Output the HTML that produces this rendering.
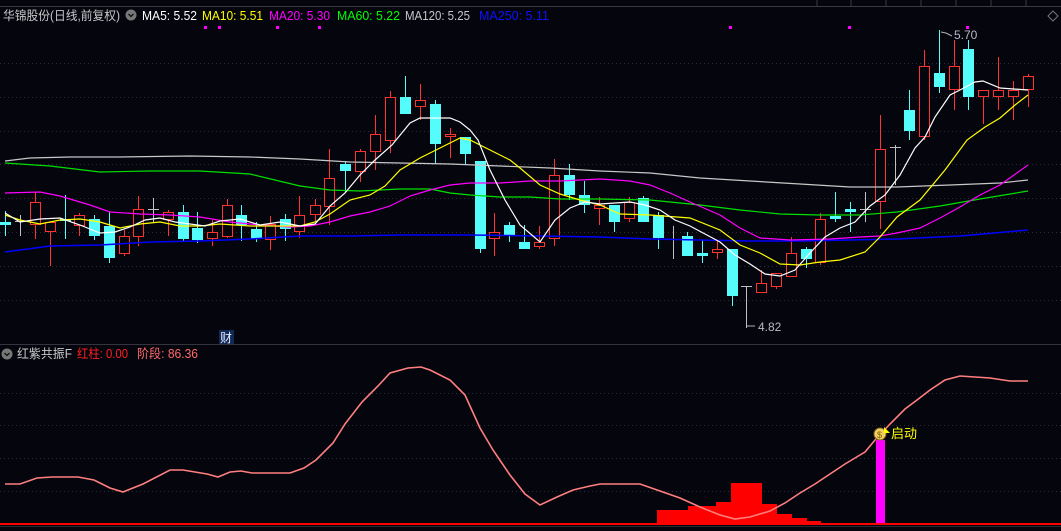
<!DOCTYPE html>
<html><head><meta charset="utf-8">
<style>
html,body{margin:0;padding:0;background:#05050e;}
body{width:1061px;height:531px;overflow:hidden;position:relative;font-family:"Liberation Sans","Noto Sans CJK SC",sans-serif;}
svg{position:absolute;left:0;top:0;}
.t{font-size:12.5px;}
</style></head>
<body>
<svg id="s" width="1061" height="531" xmlns="http://www.w3.org/2000/svg">
<rect width="1061" height="531" fill="#05050e"/>
<line x1="0" y1="6.5" x2="1061" y2="6.5" stroke="#3a3a42"/>
<g stroke="#3a3a42"><line x1="817" y1="0" x2="817" y2="6"/><line x1="851" y1="0" x2="851" y2="6"/><line x1="886" y1="0" x2="886" y2="6"/><line x1="921" y1="0" x2="921" y2="6"/><line x1="956" y1="0" x2="956" y2="6"/><line x1="991" y1="0" x2="991" y2="6"/><line x1="1026" y1="0" x2="1026" y2="6"/></g>
<g stroke="#2e2e3a" stroke-dasharray="1,3">
<line x1="0" y1="63.5" x2="1061" y2="63.5"/><line x1="0" y1="97.5" x2="1061" y2="97.5"/><line x1="0" y1="131.5" x2="1061" y2="131.5"/><line x1="0" y1="164.5" x2="1061" y2="164.5"/><line x1="0" y1="198.5" x2="1061" y2="198.5"/><line x1="0" y1="232.5" x2="1061" y2="232.5"/><line x1="0" y1="266.5" x2="1061" y2="266.5"/><line x1="0" y1="300.5" x2="1061" y2="300.5"/>
<line x1="0" y1="393.5" x2="1061" y2="393.5"/><line x1="0" y1="425.5" x2="1061" y2="425.5"/><line x1="0" y1="458.5" x2="1061" y2="458.5"/><line x1="0" y1="491.5" x2="1061" y2="491.5"/>
</g>
<line x1="0" y1="344.5" x2="1061" y2="344.5" stroke="#34343e"/>
<path d="M1053 11 L1058 16 L1053 21 L1048 16 Z" fill="none" stroke="#777"/>
<g fill="#ff00ff"><rect x="204" y="26" width="3" height="3"/><rect x="218" y="26" width="3" height="3"/><rect x="276" y="26" width="3" height="3"/><rect x="318" y="26" width="3" height="3"/><rect x="729" y="26" width="3" height="3"/><rect x="848" y="26" width="3" height="3"/><rect x="966" y="26" width="3" height="3"/></g>
<g id="cd"></g>
<g fill="none" stroke-width="1.2">
<polyline stroke="#c8c8c8" points="5,161 30,158 70,157 120,157 190,156 250,157 300,159 350,162 400,163 450,164 500,166 550,168 600,171 650,173 700,178 750,181 800,184 850,187 897,187 950,185 1000,183 1028,180"/>
<polyline stroke="#00e000" points="5,163 50,166 100,172 150,171 200,171 250,174 300,186 330,190 360,191 400,189 430,189 450,193 470,195 500,197 530,197 560,199 600,199 650,200 700,205 740,210 780,214 820,215 860,215 897,212 940,206 980,199 1028,191"/>
<polyline stroke="#0000ff" stroke-width="1.5" points="5,252 50,246 100,245 150,242 200,241 250,239 300,236 350,236 400,235 470,235 540,236 600,237 650,239 700,240 750,241 800,241 850,240 897,239 960,236 1028,230"/>
<polyline stroke="#ff00ff" points="5,193 40,192 60,196 90,205 110,212 140,214 170,215 200,217 230,222 260,225 290,227 310,226 330,222 350,216 370,212 390,206 410,196 430,190 450,185 470,183 500,183 530,181 560,181 600,179 630,181 650,185 670,193 690,202 720,215 740,228 760,238 790,240 830,239 860,237 880,236 897,233 920,228 940,218 960,207 980,195 1000,185 1028,165"/>
<polyline stroke="#ffff00" points="5,215 20,220 40,224 60,220 80,219 100,222 120,228 140,224 160,222 180,226 200,226 220,224 250,226 280,226 300,226 315,222 330,214 350,200 370,195 385,186 400,170 420,158 440,148 460,138 470,140 490,150 510,160 520,168 540,185 560,194 580,200 600,205 620,214 650,215 690,218 720,230 740,245 760,253 780,264 800,265 820,262 840,260 865,252 880,237 897,217 920,200 945,170 967,140 985,127 1000,118 1015,105 1028,95"/>
<polyline stroke="#ffffff" points="5,213 20,222 40,219 60,218 80,225 100,233 115,232 130,227 145,220 160,218 175,222 190,224 205,226 220,221 240,219 260,225 280,222 300,226 315,224 330,206 345,193 360,175 375,160 392,145 410,123 420,118 450,118 460,122 470,130 478,140 490,170 505,200 520,225 540,242 555,220 570,208 585,202 600,204 615,203 630,202 645,205 660,210 675,220 690,226 705,234 720,242 735,255 750,264 765,274 780,276 795,270 810,253 825,237 840,228 855,222 870,206 885,195 900,175 915,148 925,137 935,117 950,95 960,90 975,82 983,81 1000,88 1028,90"/>
</g>
<g stroke="#b0b0b0" fill="none"><polyline points="941,32 946,33 952,36"/><line x1="747" y1="326" x2="755" y2="326"/></g>
<text x="954" y="39" fill="#b8b8c8" font-size="12" font-family="Liberation Sans,sans-serif">5.70</text>
<text x="758" y="331" fill="#b8b8c8" font-size="12" font-family="Liberation Sans,sans-serif">4.82</text>
<rect x="219" y="330" width="15" height="14" fill="#102a55"/>
<text x="220" y="342" fill="#e8e8ff" font-size="12">财</text>
<g fill="#ff0000">
<rect x="657" y="510" width="31" height="14"/><rect x="688" y="506" width="28" height="18"/><rect x="716" y="502" width="15" height="22"/><rect x="731" y="483" width="31" height="41"/><rect x="762" y="504" width="15" height="20"/><rect x="777" y="514" width="15" height="10"/><rect x="792" y="518" width="15" height="6"/><rect x="807" y="521" width="14" height="3"/><rect x="821" y="523" width="30" height="1"/>
</g>
<rect x="876" y="440" width="9" height="84" fill="#ff00ff"/>
<polyline fill="none" stroke="#ff7f7f" stroke-width="1.6" points="5,484 20,484 37,478 52,477 78,477 94,480 110,488 123,492 143,484 170,470 183,470 207,474 218,477 230,472 241,471 252,473 290,473 304,468 316,460 333,443 345,424 362,402 378,386 390,373 408,368 421,367 430,370 450,380 465,395 480,428 493,450 510,475 525,494 540,505 557,497 573,490 590,486 600,484 640,484 660,491 680,498 700,507 720,515 735,519 750,517 770,511 785,503 800,493 815,484 830,474 845,464 860,455 865,452 875,440 890,424 905,409 917,400 930,390 945,380 960,376 990,378 1010,381 1028,381"/>
<rect x="0" y="523" width="1061" height="2" fill="#ff0000"/>
<rect x="0" y="526" width="1061" height="1" fill="#2a2a32"/>
<circle cx="880" cy="434" r="6" fill="#f0d060" stroke="#806020"/>
<text x="877" y="438" fill="#806000" font-size="9">$</text>
<path d="M884 427 L890 433 L884 433 Z" fill="#ffff00"/>
<text x="891" y="438" fill="#ffff00" font-size="13">启动</text>
<text class="t" x="3" y="20" fill="#c8c8c8" textLength="117" lengthAdjust="spacingAndGlyphs">华锦股份(日线,前复权)</text>
<circle cx="131" cy="15" r="5.5" fill="#777"/><path d="M128.5 14 L131 16.5 L133.5 14" stroke="#111" fill="none" stroke-width="1.3"/>
<text class="t" x="142" y="20" fill="#ffffff" textLength="55" lengthAdjust="spacingAndGlyphs">MA5: 5.52</text>
<text class="t" x="202" y="20" fill="#ffff00" textLength="61" lengthAdjust="spacingAndGlyphs">MA10: 5.51</text>
<text class="t" x="269" y="20" fill="#ff00ff" textLength="61" lengthAdjust="spacingAndGlyphs">MA20: 5.30</text>
<text class="t" x="337" y="20" fill="#00ff00" textLength="63" lengthAdjust="spacingAndGlyphs">MA60: 5.22</text>
<text class="t" x="405" y="20" fill="#c8c8c8" textLength="65" lengthAdjust="spacingAndGlyphs">MA120: 5.25</text>
<text class="t" x="479" y="20" fill="#1010ff">MA250: 5.11</text>
<circle cx="7" cy="354" r="5.5" fill="#777"/><path d="M4.5 353 L7 355.5 L9.5 353" stroke="#111" fill="none" stroke-width="1.3"/>
<text class="t" x="17" y="358" fill="#c8c8c8" textLength="55" lengthAdjust="spacingAndGlyphs">红紫共振F</text>
<text class="t" x="77" y="358" fill="#ff2020" textLength="51" lengthAdjust="spacingAndGlyphs">红柱: 0.00</text>
<text class="t" x="137" y="358" fill="#ff6a6a" textLength="61" lengthAdjust="spacingAndGlyphs">阶段: 86.36</text>
</svg>
<script>
var C=[
[5,222,225,211,236,'c'],[20,221,221,215,236,'g'],[35,225,202,192,239,'r'],[50,232,222,222,266,'r'],[65,219,221,195,239,'c'],
[79,226,215,213,236,'r'],[94,219,236,215,240,'c'],[109,226,258,212,263,'c'],[124,254,236,230,256,'r'],[138,237,209,196,246,'r'],
[153,209,209,198,222,'g'],[168,220,212,210,236,'r'],[183,212,239,205,241,'c'],[197,228,240,212,243,'c'],[212,239,232,220,246,'r'],
[227,237,205,199,238,'r'],[241,215,225,205,241,'c'],[256,229,239,222,242,'c'],[270,240,224,216,250,'r'],[285,219,229,214,241,'c'],
[299,232,215,196,238,'r'],[315,215,205,199,222,'r'],[329,207,178,149,225,'r'],[345,164,171,161,192,'c'],[360,172,151,149,182,'r'],
[375,152,134,115,170,'r'],[390,141,97,91,153,'r'],[405,97,114,76,114,'c'],[420,107,100,84,120,'r'],[435,104,144,100,164,'c'],
[450,137,134,128,158,'r'],[465,137,154,137,164,'c'],[480,161,249,161,253,'c'],[494,239,232,213,256,'r'],[509,225,235,222,242,'c'],
[524,242,249,225,249,'c'],[539,247,242,226,249,'r'],[554,239,175,159,246,'r'],[569,175,195,164,200,'c'],[584,195,205,181,213,'c'],
[599,209,205,197,225,'r'],[614,205,222,205,232,'c'],[629,219,202,197,222,'r'],[643,198,222,196,222,'c'],[658,215,238,212,249,'c'],
[673,239,239,226,259,'g'],[687,236,256,232,256,'c'],[702,253,256,240,263,'c'],[717,253,249,240,259,'r'],[732,249,296,249,306,'c'],
[746,286,286,286,328,'g'],[761,293,283,270,293,'r'],[776,287,273,273,289,'r'],[791,277,253,237,277,'r'],[806,249,259,247,268,'c'],
[820,263,219,213,265,'r'],[835,216,219,192,222,'c'],[850,209,212,202,232,'c'],[865,209,209,192,222,'g'],[880,202,149,115,229,'r'],
[895,147,147,145,185,'g'],[909,110,131,90,140,'c'],[924,137,66,50,140,'r'],[939,73,87,30,93,'c'],[954,90,66,40,110,'r'],
[968,49,97,40,110,'c'],[983,97,90,90,124,'r'],[998,97,90,57,110,'r'],[1013,97,90,81,120,'r'],[1028,90,76,74,107,'r']
];
var g=document.getElementById('cd'),h='';
C.forEach(function(k){var x=k[0],o=k[1],c=k[2],hi=k[3],lo=k[4],t=k[5];var top=Math.min(o,c),bot=Math.max(o,c);
if(t=='g'){h+='<line x1="'+(x+.5)+'" y1="'+hi+'" x2="'+(x+.5)+'" y2="'+lo+'" stroke="#c0c0c0"/><line x1="'+(x-5)+'" y1="'+(o+.5)+'" x2="'+(x+6)+'" y2="'+(o+.5)+'" stroke="#c0c0c0"/>';}
else if(t=='c'){h+='<line x1="'+(x+.5)+'" y1="'+hi+'" x2="'+(x+.5)+'" y2="'+lo+'" stroke="#54fcfc"/><rect x="'+(x-5)+'" y="'+top+'" width="11" height="'+Math.max(bot-top,2)+'" fill="#54fcfc"/>';}
else{h+='<line x1="'+(x+.5)+'" y1="'+hi+'" x2="'+(x+.5)+'" y2="'+top+'" stroke="#ff3232"/><line x1="'+(x+.5)+'" y1="'+bot+'" x2="'+(x+.5)+'" y2="'+lo+'" stroke="#ff3232"/><rect x="'+(x-4.5)+'" y="'+(top+.5)+'" width="10" height="'+Math.max(bot-top-1,1)+'" fill="#05050e" stroke="#ff3232"/>';}
});
g.innerHTML=h;
</script>
</body></html>
